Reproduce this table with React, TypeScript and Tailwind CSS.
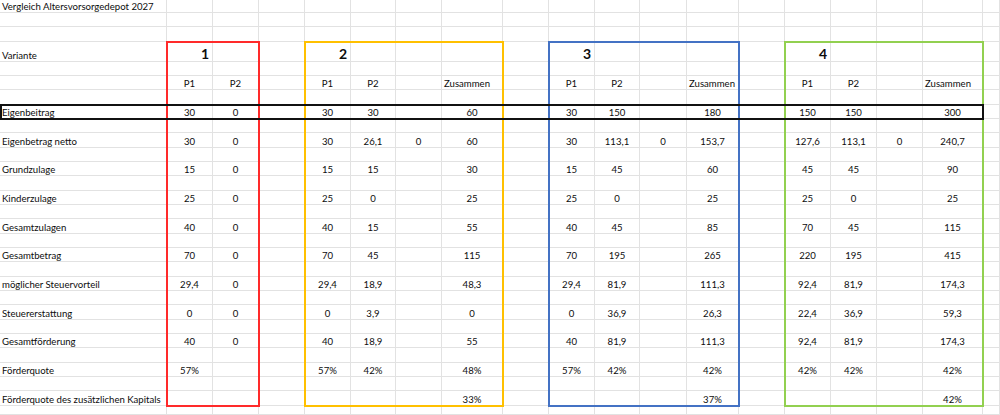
const COL_START = [
    "col-start-1", "col-start-2", "col-start-3", "col-start-4", "col-start-5",
    "col-start-6", "col-start-7", "col-start-8", "col-start-9", "col-start-10",
    "col-start-11", "col-start-12", "col-start-13", "col-start-14", "col-start-15",
    "col-start-16", "col-start-17", "col-start-18", "col-start-19",
];

const ROW_START = [
    "row-start-1", "row-start-2", "row-start-3", "row-start-4", "row-start-5",
    "row-start-6", "row-start-7", "row-start-8", "row-start-9", "row-start-10",
    "row-start-11", "row-start-12", "row-start-13", "row-start-14", "row-start-15",
    "row-start-16", "row-start-17", "row-start-18", "row-start-19", "row-start-20",
    "row-start-21", "row-start-22", "row-start-23", "row-start-24", "row-start-25",
    "row-start-26", "row-start-27", "row-start-28", "row-start-29",
];

const NCOLS = 19;
const NROWS = 29;

type Row = { label?: string; cells?: Record<number, string> };

const rows: Record<number, Row> = {
    1: { label: "Vergleich Altersvorsorgedepot 2027" },
    4: { label: "Variante" },
    6: { cells: { 2: "P1", 3: "P2", 5: "P1", 6: "P2", 8: "Zusammen", 10: "P1", 11: "P2", 13: "Zusammen", 15: "P1", 16: "P2", 18: "Zusammen" } },
    8: { label: "Eigenbeitrag", cells: { 2: "30", 3: "0", 5: "30", 6: "30", 8: "60", 10: "30", 11: "150", 13: "180", 15: "150", 16: "150", 18: "300" } },
    10: { label: "Eigenbetrag netto", cells: { 2: "30", 3: "0", 5: "30", 6: "26,1", 7: "0", 8: "60", 10: "30", 11: "113,1", 12: "0", 13: "153,7", 15: "127,6", 16: "113,1", 17: "0", 18: "240,7" } },
    12: { label: "Grundzulage", cells: { 2: "15", 3: "0", 5: "15", 6: "15", 8: "30", 10: "15", 11: "45", 13: "60", 15: "45", 16: "45", 18: "90" } },
    14: { label: "Kinderzulage", cells: { 2: "25", 3: "0", 5: "25", 6: "0", 8: "25", 10: "25", 11: "0", 13: "25", 15: "25", 16: "0", 18: "25" } },
    16: { label: "Gesamtzulagen", cells: { 2: "40", 3: "0", 5: "40", 6: "15", 8: "55", 10: "40", 11: "45", 13: "85", 15: "70", 16: "45", 18: "115" } },
    18: { label: "Gesamtbetrag", cells: { 2: "70", 3: "0", 5: "70", 6: "45", 8: "115", 10: "70", 11: "195", 13: "265", 15: "220", 16: "195", 18: "415" } },
    20: { label: "möglicher Steuervorteil", cells: { 2: "29,4", 3: "0", 5: "29,4", 6: "18,9", 8: "48,3", 10: "29,4", 11: "81,9", 13: "111,3", 15: "92,4", 16: "81,9", 18: "174,3" } },
    22: { label: "Steuererstattung", cells: { 2: "0", 3: "0", 5: "0", 6: "3,9", 8: "0", 10: "0", 11: "36,9", 13: "26,3", 15: "22,4", 16: "36,9", 18: "59,3" } },
    24: { label: "Gesamtförderung", cells: { 2: "40", 3: "0", 5: "40", 6: "18,9", 8: "55", 10: "40", 11: "81,9", 13: "111,3", 15: "92,4", 16: "81,9", 18: "174,3" } },
    26: { label: "Förderquote", cells: { 2: "57%", 5: "57%", 6: "42%", 8: "48%", 10: "57%", 11: "42%", 13: "42%", 15: "42%", 16: "42%", 18: "42%" } },
    28: { label: "Förderquote des zusätzlichen Kapitals", cells: { 8: "33%", 13: "37%", 18: "42%" } },
};

const variantNumbers: Record<number, string> = { 2: "1", 5: "2", 10: "3", 15: "4" };

function Cell({ r, c }: { r: number; c: number }) {
    const row = rows[r];
    let text: string | undefined;
    let align = "justify-center";
    let extra = "";

    if (c === 1) {
        text = row?.label;
        align = "justify-start pl-[2px]";
    } else if (r === 4 && variantNumbers[c]) {
        text = variantNumbers[c];
        align = "justify-end pr-[3px]";
        extra = "font-bold text-[14px] leading-[15px]";
    } else {
        text = row?.cells?.[c];
        if (text === "Zusammen") align = "justify-start pl-[2px]";
    }

    return (
        <div
            className={ `${ COL_START[c - 1] } ${ ROW_START[r - 1] } flex items-end border-r border-b border-[#e2e2e2] whitespace-nowrap overflow-visible ${ align }` }
        >
            { text && <span className={ extra }>{ text }</span> }
        </div>
    );
}

function App() {
    const cells = [];
    for (let r = 1; r <= NROWS; r++) {
        for (let c = 1; c <= NCOLS; c++) {
            cells.push(<Cell key={ `${ r }-${ c }` } r={ r } c={ c } />);
        }
    }

    return (
        <div
            className="grid h-[415px] w-[1000px] overflow-hidden bg-white text-[#0d0d0d] text-[9.6px] leading-[10px]
            grid-cols-[167px_46px_46px_46px_46px_45px_46px_61px_46px_46px_45px_47px_52px_46px_46px_46px_46px_60px_1fr]
            grid-rows-[13px_14px_15px_19.5px_repeat(24,14.35px)_1fr]"
            style={ { fontFamily: "Lato, 'Open Sans', sans-serif" } }
        >
            { cells }

            {/* Varianten-Rahmen */ }
            <div className="col-start-2 col-end-4 row-start-4 row-end-29 -ml-px -mr-px -mt-px -mb-px border-2 border-[#ff2a2a]" />
            <div className="col-start-5 col-end-9 row-start-4 row-end-29 -ml-px -mr-px -mt-px -mb-px border-2 border-[#ffc000]" />
            <div className="col-start-10 col-end-14 row-start-4 row-end-29 -ml-px -mr-px -mt-px -mb-px border-2 border-[#4472c4]" />
            <div className="col-start-15 col-end-19 row-start-4 row-end-29 -ml-px -mr-px -mt-px -mb-px border-2 border-[#92d050]" />

            {/* Eigenbeitrag-Zeile */ }
            <div className="col-start-1 col-end-19 row-start-8 row-end-9 -mr-px -mt-px -mb-px border-2 border-[#111]" />
        </div>
    );
}

export default App;
